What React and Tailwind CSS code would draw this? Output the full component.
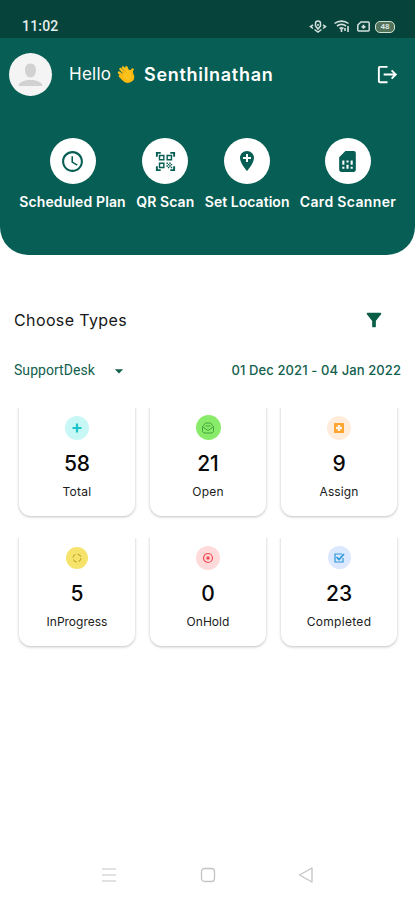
import React from "react";
import {
  MdLogout,
  MdAccessTime,
  MdQrCodeScanner,
  MdAddLocation,
  MdSimCard,
  MdFilterAlt,
  MdArrowDropDown,
} from "react-icons/md";

const actions = [
  { label: "Scheduled Plan", icon: MdAccessTime, width: "w-[107px]", text: "tracking-[0.12px]", size: 25 },
  { label: "QR Scan", icon: MdQrCodeScanner, width: "w-[58px]", text: "tracking-[0.1px]", size: 23 },
  { label: "Set Location", icon: MdAddLocation, width: "w-[85px]", text: "tracking-[0.03px]", size: 24 },
  { label: "Card Scanner", icon: MdSimCard, width: "w-[96px]", text: "tracking-[0.35px]", size: 25 },
];

const PlusIcon = () => (
  <svg width="12" height="12" viewBox="0 0 12 12" stroke="#1cc3c9" strokeWidth="2.2">
    <path d="M6 1.5v9M1.5 6h9" />
  </svg>
);

const MailOpenIcon = () => (
  <svg width="14" height="14" viewBox="0 0 14 14" fill="none" stroke="#43a53a" strokeWidth="1" strokeLinejoin="round">
    <path d="M1.5 5.5 4.5 2h5l3 3.500v5L11 12H3l-1.500-1.500zM2 6l5 3.500L12 6M4.500 5h5" />
  </svg>
);

const AssignIcon = () => (
  <svg width="12" height="12" viewBox="0 0 12 12">
    <rect x="1" y="1" width="10" height="10" rx="0.5" fill="#fca52f" />
    <path d="M6 3v6M3 6h6" stroke="#fff1df" strokeWidth="2.4" />
  </svg>
);

const ProgressIcon = () => (
  <svg width="12" height="12" viewBox="0 0 12 12" fill="none" stroke="#c7ac2d" strokeWidth="1.2">
    <circle cx="6" cy="6" r="4" strokeDasharray="4.3 2" />
  </svg>
);

const HoldIcon = () => (
  <svg width="12" height="12" viewBox="0 0 12 12" fill="none" stroke="#f4484f">
    <circle cx="6" cy="6" r="4.5" strokeWidth="1.2" />
    <rect x="5" y="5" width="2" height="2" fill="#f4484f" />
  </svg>
);

const CompletedIcon = () => (
  <svg width="12" height="12" viewBox="0 0 12 12" fill="none" stroke="#2b97d8" strokeWidth="1.2">
    <path d="M10 6v4H2V2h7" />
    <path d="m3.5 5 2.5 2.5L11 2" strokeWidth="1.7" />
  </svg>
);

const rows = [
  [
    { count: 58, label: "Total", icon: PlusIcon, tint: "bg-[#c8f8f6]", size: "size-6", text: "tracking-[0.25px]" },
    { count: 21, label: "Open", icon: MailOpenIcon, tint: "bg-[#88eb69]", size: "size-[25px]", text: "tracking-[0.2px]" },
    { count: 9, label: "Assign", icon: AssignIcon, tint: "bg-[#ffecda]", size: "size-6", text: "tracking-[0.1px]" },
  ],
  [
    { count: 5, label: "InProgress", icon: ProgressIcon, tint: "bg-[#f6e36c]", size: "size-[22px]", text: "tracking-[0px]" },
    { count: 0, label: "OnHold", icon: HoldIcon, tint: "bg-[#ffdadb]", size: "size-6", text: "tracking-[0.05px]" },
    { count: 23, label: "Completed", icon: CompletedIcon, tint: "bg-[#dce8fe]", size: "size-[23px]", text: "tracking-[0.3px]" },
  ],
];

const StatusBar = () => (
  <div className="flex h-[38px] items-end justify-between bg-[#06443b] pr-[20px] pb-[3px] pl-[22px] text-white">
    <span className="font-[Roboto,sans-serif] text-[14px] leading-[17px] font-medium tracking-[0.2px] text-[#e5efed]">11:02</span>
    <div className="flex h-[17px] items-center gap-[7px] text-[#d4e1de]">
      <svg width="18" height="13" viewBox="0 0 18 13" fill="none" stroke="currentColor" strokeWidth="1.5">
        <path d="M4 5 1.5 6.500 4 8.500M14 5l2.500 1.500L14 8.500M5.500 9.500 9 12l3.500-2.500" />
        <path d="M6.500 6V3.500a2.500 2.500 0 0 1 5 0V6L9 9z" />
        <path d="M9 4v2" />
      </svg>
      <svg width="16" height="13" viewBox="0 0 16 13" fill="none" stroke="currentColor" strokeWidth="1.6">
        <path d="M.5 3.500c4-3.200 10-3.200 14 0M3 6c3-2.200 6-2.200 9 0M5.500 8.500c1.500-1 2.500-1 4 0M7.500 9v3M11 11V8M14 12V6" />
      </svg>
      <svg width="13" height="11" viewBox="0 0 13 11" fill="none" stroke="currentColor" strokeWidth="1.5">
        <path d="M4 1h7.200q1 0 1 1v7q0 1-1 1H1.800q-1 0-1-1V4z" />
        <path d="M4.500 5.800h4M6.500 3.800v4" strokeWidth="1.7" />
      </svg>
      <div className="-ml-[2px] flex h-[12px] w-[20px] items-center justify-center rounded-[5px] border-[1.5px] border-[#cfe2d2] bg-[#53735b] font-[Roboto,sans-serif] text-[8px] leading-none font-bold">
        48
      </div>
    </div>
  </div>
);

const WavingHand = () => (
  <svg width="19" height="19" viewBox="0 0 19 19" fill="none" strokeLinecap="round">
    <path d="M5 9 11 15 16 11 14 5 9 5z" fill="#fdc21b" />
    <path d="M7.5 8.500 3.500 4M9.500 7 6 2.500M11.500 7 9.300 2.300M6 11 2 7.500" stroke="#fdc21b" strokeWidth="2.5" />
    <path d="M15.5 4.500c-1.500 2-1 3.500 0 5.500s.5 4-1.500 5.500c-2.500 1.800-5.500 1-7.500-1L3 11" stroke="#fdb812" strokeWidth="2.6" fill="#fdc21b" />
    <path d="M7 8.500 4.700 6M9.300 7.500 7.300 4.800M6 11 3.500 8.800" stroke="#e49a0d" strokeWidth=".6" />
  </svg>
);

const Header = () => (
  <header className="h-[255px] overflow-hidden rounded-b-[28px] bg-[#075e54] text-white">
    <StatusBar />
    <div className="flex h-[73px] items-center pr-[16px] pl-[9px]">
      <div className="flex size-[43px] items-center justify-center overflow-hidden rounded-full bg-[#f4f4f4]">
        <svg width="43" height="43" viewBox="0 0 43 43" fill="#d1d1d1">
          <path d="M21.500 10.500c4 0 5.500 3 5.500 6.500 0 4-2.200 7.500-5.500 7.500S16 21 16 17c0-3.500 1.500-6.500 5.500-6.500zM9.500 33c.5-4 5-5 9-6h6c4 1 8.500 2 9 6z" />
        </svg>
      </div>
      <span className="ml-[17px] w-[42px] text-[17px] tracking-[0.25px] whitespace-nowrap">Hello</span>
      <span className="ml-[6px]"><WavingHand /></span>
      <span className="ml-[8px] text-[18px] font-semibold tracking-[0.7px] whitespace-nowrap">Senthilnathan</span>
      <MdLogout className="ml-auto" size={23} />
    </div>
    <div className="flex justify-between pt-[27px] pr-[19px] pl-[19px]">
      {actions.map(({ label, icon: Icon, width, text, size }) => (
        <button key={label} type="button" className={`flex flex-col items-center ${width}`}>
          <span className="flex size-[46px] items-center justify-center rounded-full bg-white text-[#075e54]">
            <Icon size={size} />
          </span>
          <span className={`mt-[8px] text-[14px] leading-5 font-semibold whitespace-nowrap ${text}`}>{label}</span>
        </button>
      ))}
    </div>
  </header>
);

const StatCard = ({ item }) => {
  const Icon = item.icon;
  return (
    <div className="-mt-[12px] flex h-[120px] w-[116px] flex-col items-center rounded-xl bg-white pt-[19px] shadow-[0_1px_3px_rgba(0,0,0,0.25)]">
      <span className="flex h-[25px] items-center">
        <span className={`flex items-center justify-center rounded-full ${item.size} ${item.tint}`}>
          <Icon />
        </span>
      </span>
      <span className="mt-[10px] text-[21px] leading-[28px] font-medium text-[#080808]">{item.count}</span>
      <span className={`mt-[5px] text-[12px] leading-[18px] text-[#202020] ${item.text}`}>{item.label}</span>
    </div>
  );
};

const BottomNav = () => (
  <nav className="mt-auto flex h-[50px] items-center justify-between px-[101px] text-[#c4c4c4]">
    <svg width="16" height="16" viewBox="0 0 16 16" stroke="currentColor" strokeWidth="1.2">
      <path d="M1 2h14M1 8h14M1 14h14" />
    </svg>
    <svg width="16" height="16" viewBox="0 0 16 16" fill="none" stroke="currentColor" strokeWidth="1.3">
      <rect x="1.500" y="1.500" width="13" height="13" rx="3" />
    </svg>
    <svg width="16" height="16" viewBox="0 0 16 16" fill="none" stroke="currentColor" strokeWidth="1.3" strokeLinejoin="round">
      <path d="M14 1v14L1.500 8z" />
    </svg>
  </nav>
);

const App = () => {
  return (
    <div className="flex h-[900px] w-[415px] flex-col overflow-hidden bg-white font-[Inter,sans-serif]">
      <Header />
      <main>
        <div className="flex items-center justify-between pt-[53px] pr-[30px] pl-[14px]">
          <h1 className="text-[16px] leading-6 tracking-[0.38px] text-[#171717]">Choose Types</h1>
          <MdFilterAlt size={22} className="text-[#075e44]" />
        </div>
        <div className="mt-[28px] flex h-[21px] items-center justify-between pr-[14px] pl-[14px] text-[#12604d]">
          <button type="button" className="flex items-center">
            <span className="w-[95px] text-left font-[Roboto,sans-serif] text-[14px] tracking-[0.05px]">SupportDesk</span>
            <MdArrowDropDown size={20} />
          </button>
          <span className="text-[13px] font-medium tracking-[0.1px] whitespace-nowrap">01 Dec 2021 - 04 Jan 2022</span>
        </div>
        <div className="mt-[27px] flex flex-col gap-[16px]">
          {rows.map((row, i) => (
            <div key={i} className="flex h-[114px] justify-between overflow-hidden pr-[18px] pl-[19px]">
              {row.map((item) => (
                <StatCard key={item.label} item={item} />
              ))}
            </div>
          ))}
        </div>
      </main>
      <BottomNav />
    </div>
  );
};

export default App;
